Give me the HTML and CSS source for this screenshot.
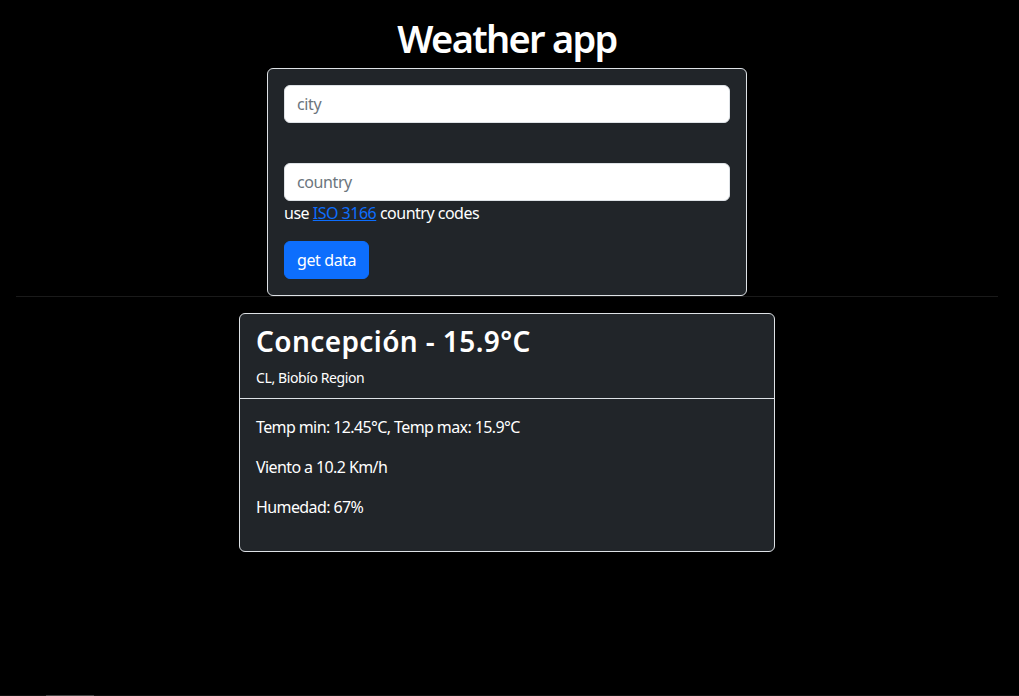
FILE: index.html
```html
<!DOCTYPE html>
<html lang="es">
<head>
<meta charset="utf-8">
<title>Weather app</title>
<link rel="stylesheet" href="styles.css">
</head>
<body>
<div class="container">
  <h1 class="title">Weather app</h1>
  <form class="card form-card">
    <input class="field" type="text" placeholder="city">
    <input class="field field-country" type="text" placeholder="country">
    <div class="help">use <a href="#">ISO 3166</a> country codes</div>
    <button class="btn" type="button">get data</button>
  </form>
  <hr class="divider">
  <div class="card result-card">
    <div class="card-header">
      <h3 class="city">Concepción - 15.9°C</h3>
      <p class="region">CL, Biobío Region</p>
    </div>
    <div class="card-body">
      <p>Temp min: 12.45°C, Temp max: 15.9°C</p>
      <p>Viento a 10.2 Km/h</p>
      <p>Humedad: 67%</p>
    </div>
  </div>
</div>
<div class="hscroll"><div class="hscroll-thumb"></div></div>
</body>
</html>
```
FILE: styles.css
```css
html, body {
  margin: 0;
  padding: 0;
  background: #000;
  height: 100%;
  overflow: hidden;
}
body {
  font-family: "Noto Sans", "Open Sans", sans-serif;
  color: #fff;
  font-size: 16px;
  line-height: 1.5;
}
.container {
  padding: 14px 21px 0 16px;
  display: flex;
  flex-direction: column;
  align-items: center;
}
.title {
  margin: 0 0 6px;
  font-size: 38px;
  font-weight: 600;
  line-height: 48px;
  letter-spacing: -1.7px;
}
.card {
  background: #212529;
  border: 1px solid #dee2e6;
  border-radius: 6px;
  box-sizing: border-box;
}
.form-card {
  width: 480px;
  padding: 16px;
  margin: 0;
  display: flex;
  flex-direction: column;
  align-items: flex-start;
}
.field {
  width: 100%;
  box-sizing: border-box;
  height: 38px;
  padding: 6px 12px;
  border: 1px solid #dee2e6;
  border-radius: 6px;
  background: #fff;
  font: inherit;
  font-size: 16px;
  letter-spacing: -0.4px;
  color: #212529;
  outline: none;
}
.field::placeholder {
  color: #6c757d;
}
.field-country {
  margin-top: 40px;
}
.help {
  font-size: 16px;
  line-height: 24px;
  letter-spacing: -0.5px;
}
.help a {
  color: #0d6efd;
  text-decoration: underline;
}
.btn {
  margin-top: 16px;
  height: 38px;
  padding: 6px 12px;
  border: 1px solid #0d6efd;
  border-radius: 6px;
  background: #0d6efd;
  color: #fff;
  font: inherit;
  font-size: 16px;
  letter-spacing: -0.4px;
  line-height: 24px;
}
.divider {
  align-self: stretch;
  margin: 0 0 16px;
  border: 0;
  border-top: 1px solid #1a1a1a;
  height: 0;
}
.result-card {
  width: 536px;
}
.card-header {
  padding: 10px 16px 10px;
  border-bottom: 1px solid #dee2e6;
}
.city {
  margin: 0 0 9px;
  font-size: 28px;
  font-weight: 600;
  line-height: 34px;
  letter-spacing: 0.4px;
}
.region {
  margin: 0;
  font-size: 14px;
  line-height: 21px;
  letter-spacing: -0.4px;
}
.card-body {
  padding: 16px;
}
.card-body p {
  margin: 0 0 16px;
  line-height: 24px;
  letter-spacing: -0.6px;
}
.hscroll {
  position: fixed;
  left: 0;
  right: 0;
  bottom: 0;
  height: 1px;
  background: #111;
}
.hscroll-thumb {
  margin-left: 46px;
  width: 48px;
  height: 1px;
  background: #444;
}
```
